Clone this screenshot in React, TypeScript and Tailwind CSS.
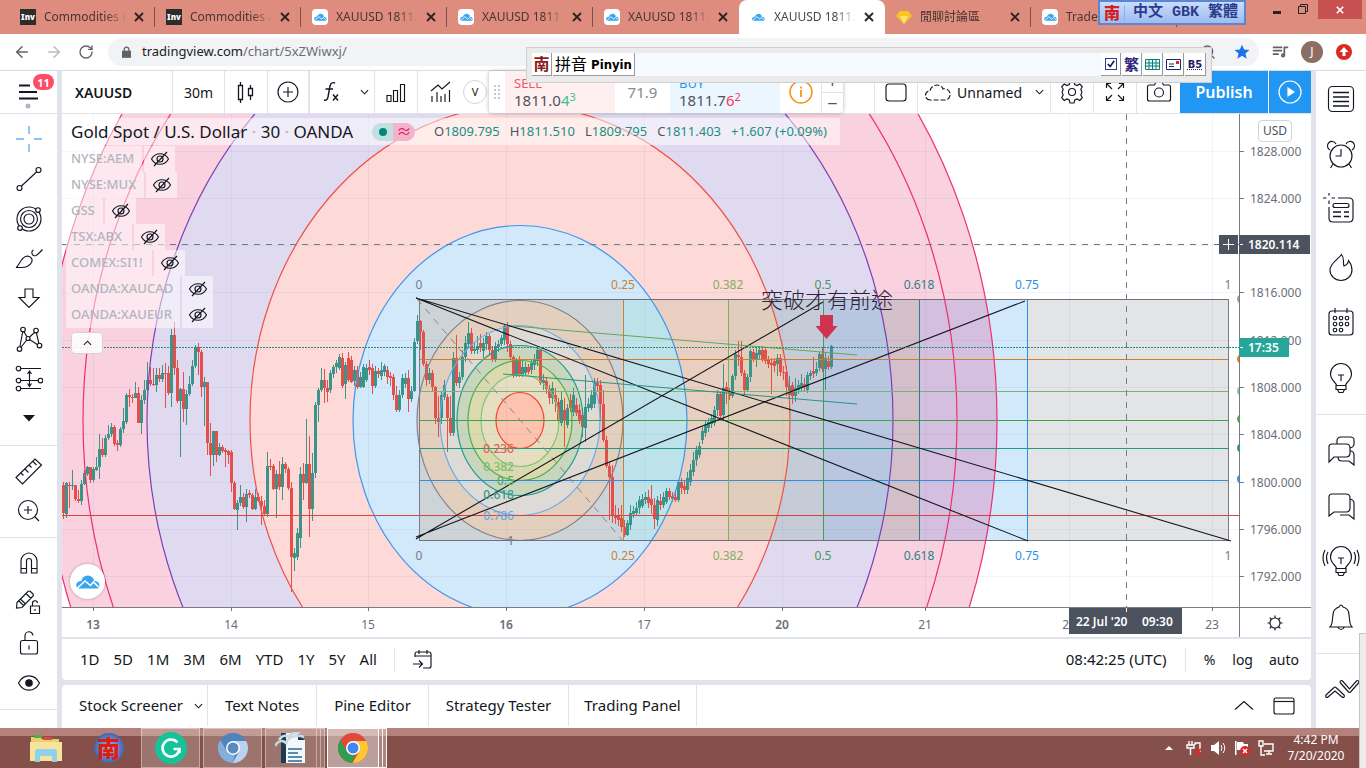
import React from 'react';
import { ArrowLeft, ArrowRight, RotateCw, Search } from 'lucide-react';

type Candle = [open: number, close: number, high?: number, low?: number];

const CHART_LEFT = 62;
const CHART_TOP = 114;
const AXIS_X = 1239;
const AXIS_Y = 607;
const BAR = 3;

// every value is a y position on the price pane
const CANDLES: Candle[] = [
  [485, 513, 482, 519], [514, 483, 482, 518], [485, 486, 482, 508], [486, 485, 470, 490], [485, 499, 485, 501],
  [499, 501, 490, 503], [501, 484, 480, 505], [484, 473, 470, 485], [474, 467, 466, 476], [467, 480, 467, 483],
  [480, 469, 467, 482], [470, 467, 457, 471], [467, 449, 434, 479], [449, 455, 438, 457], [455, 438, 435, 457],
  [438, 434, 425, 440], [434, 427, 423, 437], [427, 444, 425, 446], [443, 445, 440, 451], [445, 429, 427, 447],
  [429, 421, 408, 433], [422, 395, 393, 424], [395, 397, 389, 407], [397, 398, 394, 403], [398, 393, 382, 398],
  [393, 423, 387, 423], [423, 400, 395, 434], [400, 390, 380, 404], [390, 380, 362, 391], [380, 384, 367, 386],
  [384, 385, 368, 386], [385, 375, 368, 392], [375, 379, 368, 382], [379, 373, 365, 382], [373, 374, 363, 408],
  [373, 393, 366, 395], [393, 335, 329, 407], [335, 368, 322, 375], [368, 401, 360, 403], [401, 389, 388, 457],
  [389, 409, 372, 422], [409, 394, 390, 425], [394, 384, 376, 396], [384, 366, 360, 386], [366, 347, 345, 368],
  [347, 352, 343, 375], [352, 387, 350, 397], [387, 382, 377, 426], [382, 443, 382, 455], [443, 455, 423, 476],
  [455, 431, 431, 466], [431, 455, 431, 462], [455, 447, 443, 456], [447, 451, 445, 453], [450, 452, 448, 467],
  [451, 455, 450, 464], [452, 483, 450, 492], [483, 509, 481, 510], [510, 503, 500, 530], [503, 497, 485, 506],
  [497, 507, 493, 509], [507, 494, 489, 522], [493, 495, 490, 498], [495, 509, 493, 510], [509, 497, 489, 510],
  [497, 501, 493, 502], [501, 506, 496, 525], [506, 514, 500, 516], [514, 466, 452, 517], [466, 467, 459, 470],
  [466, 489, 464, 490], [489, 474, 470, 518], [474, 487, 461, 490], [487, 464, 457, 500], [464, 469, 462, 473],
  [469, 488, 467, 490], [488, 557, 482, 592], [558, 553, 548, 571], [557, 533, 528, 560], [538, 474, 467, 548],
  [474, 483, 463, 500], [483, 464, 419, 484], [464, 509, 436, 537], [509, 473, 453, 521], [473, 405, 402, 478],
  [405, 390, 388, 422], [390, 380, 368, 392], [380, 388, 369, 403], [388, 392, 380, 402], [390, 373, 370, 393],
  [374, 367, 365, 378], [367, 363, 360, 373], [368, 357, 354, 370], [358, 386, 353, 388], [384, 365, 362, 399],
  [358, 380, 352, 382], [360, 382, 356, 383], [381, 370, 366, 386], [370, 387, 366, 389], [387, 377, 372, 388],
  [387, 367, 364, 388], [380, 368, 364, 382], [367, 370, 360, 375], [368, 386, 364, 394], [386, 371, 366, 388],
  [371, 374, 368, 378], [376, 370, 362, 380], [372, 366, 364, 376], [370, 377, 366, 384], [376, 378, 372, 386],
  [377, 395, 374, 400], [395, 410, 386, 412], [410, 395, 390, 412], [395, 378, 374, 398], [384, 378, 373, 388],
  [378, 399, 370, 412], [399, 391, 386, 402], [391, 342, 338, 392], [341, 321, 315, 344], [321, 332, 320, 350],
  [332, 364, 330, 366], [364, 380, 361, 386], [380, 373, 368, 384], [373, 387, 370, 392], [387, 418, 386, 424],
  [418, 422, 396, 437], [418, 395, 392, 424], [397, 385, 380, 400], [397, 418, 394, 452], [418, 433, 396, 436],
  [433, 358, 352, 436], [358, 383, 335, 386], [383, 377, 372, 388], [377, 357, 350, 380], [357, 343, 336, 362],
  [344, 333, 322, 348], [333, 351, 328, 354], [351, 349, 342, 354], [350, 346, 336, 354], [343, 348, 334, 352],
  [351, 343, 338, 358], [344, 336, 332, 350], [336, 350, 334, 354], [350, 360, 346, 362], [360, 346, 342, 362],
  [347, 344, 340, 352], [344, 338, 335, 346], [340, 326, 324, 345], [326, 344, 322, 352], [344, 357, 341, 360],
  [357, 376, 355, 378], [376, 360, 358, 377], [360, 375, 356, 377], [375, 367, 360, 377], [373, 367, 362, 376],
  [367, 372, 364, 374], [370, 363, 360, 374], [365, 360, 354, 370], [361, 350, 346, 366], [350, 383, 349, 385],
  [383, 380, 374, 390], [381, 389, 378, 394], [389, 398, 385, 404], [398, 388, 382, 404], [395, 402, 388, 412],
  [402, 420, 398, 424], [423, 400, 392, 426], [410, 420, 398, 447], [425, 408, 404, 428], [400, 408, 394, 412],
  [412, 395, 388, 416], [405, 413, 398, 416], [410, 420, 404, 424], [415, 427, 408, 437], [428, 407, 375, 442],
  [408, 404, 398, 412], [408, 395, 390, 410], [404, 382, 378, 408], [383, 386, 378, 392], [385, 404, 380, 420],
  [404, 440, 390, 442], [440, 466, 436, 468], [466, 477, 462, 520], [477, 515, 465, 523], [515, 518, 505, 524],
  [516, 520, 508, 526], [518, 527, 505, 532], [527, 535, 520, 537], [535, 523, 520, 536], [525, 513, 505, 530],
  [514, 511, 506, 518], [513, 508, 502, 516], [508, 500, 496, 514], [506, 499, 494, 508], [500, 497, 492, 504],
  [497, 503, 490, 508], [499, 505, 485, 514], [505, 519, 498, 529], [520, 500, 496, 526], [501, 505, 494, 510],
  [505, 497, 492, 508], [502, 491, 488, 504], [491, 497, 488, 500], [496, 499, 492, 502], [497, 500, 492, 502],
  [500, 482, 480, 502], [482, 488, 478, 494], [486, 490, 480, 494], [490, 478, 472, 494], [482, 470, 464, 486],
  [472, 460, 452, 476], [460, 450, 446, 466], [455, 446, 442, 458], [440, 431, 427, 444], [433, 425, 420, 437],
  [428, 422, 418, 432], [424, 418, 414, 428], [423, 410, 406, 426], [410, 394, 390, 416], [394, 416, 392, 419],
  [415, 388, 364, 420], [387, 391, 382, 404], [393, 396, 388, 400], [396, 376, 374, 398], [376, 354, 350, 380],
  [355, 357, 341, 366], [357, 373, 341, 376], [373, 390, 370, 395], [390, 377, 374, 392], [377, 351, 349, 382],
  [352, 359, 349, 362], [360, 353, 348, 367], [355, 350, 346, 360], [350, 359, 346, 362], [350, 361, 348, 364],
  [360, 364, 356, 368], [363, 365, 358, 394], [361, 366, 358, 372], [364, 358, 354, 376], [358, 372, 354, 376],
  [372, 373, 366, 380], [372, 387, 366, 396], [395, 386, 376, 413], [385, 396, 382, 404], [396, 388, 378, 402],
  [390, 385, 380, 394], [388, 383, 374, 392], [384, 387, 378, 392], [390, 375, 372, 393], [376, 373, 370, 380],
  [371, 374, 357, 378], [373, 369, 362, 376], [368, 354, 352, 371], [354, 369, 348, 372], [369, 358, 352, 390],
  [361, 367, 356, 370], [367, 346, 345, 369],
];

const CX = 520;
const CY = 420.5;

// outer fib circles, largest first
const OUTER = [
  { rx: 477, ry: 556, fill: '#fad1df', stroke: '#ed2f70' },
  { rx: 437, ry: 510, fill: '#fad1df', stroke: '#ed2f70' },
  { rx: 373, ry: 436, fill: '#e0daf1', stroke: '#7e3fb5' },
  { rx: 270, ry: 315, fill: '#fddad7', stroke: '#f0504b' },
  { rx: 167, ry: 195, fill: '#d2e9fc', stroke: '#3f97ec' },
];

const INNER = [
  { rx: 103, ry: 120, fill: '#e2cfbe', stroke: '#84828a' },
  { rx: 80, ry: 95, fill: '#dedad5', stroke: '#69aeee' },
  { rx: 63, ry: 75, fill: '#c8d6bd', stroke: '#1f9d8f' },
  { rx: 52, ry: 60, fill: '#dbd9ae', stroke: '#4caf50' },
  { rx: 39, ry: 46, fill: '#e6dec0', stroke: '#7cc77f' },
  { rx: 24, ry: 28, fill: '#fdc3ae', stroke: '#f44336' },
];

// fills: background, then outer circles in the order of OUTER
const COLUMNS = [
  { id: 'c0', x: 419, w: 204, fills: ['#cdd4d8', '#cdd4d8', '#cdd4d8', '#cdd4d8', '#cdd4d8', '#cdd4d8'] },
  { id: 'c1', x: 623, w: 105, fills: ['#e9cfc2', '#e9cfc2', '#e9cfc2', '#e9cfc2', '#e9cfc2', '#bde2e9'] },
  { id: 'c2', x: 728, w: 95, fills: ['#c6cbd8', '#c6cbd8', '#c6cbd8', '#c6cbd8', '#e0cdbc', '#e0cdbc'] },
  { id: 'c3', x: 823, w: 96, fills: ['#d2bfca', '#d2bfca', '#d2bfca', '#b8c7df', '#b8c7df', '#b8c7df'] },
  { id: 'c4', x: 919, w: 108, fills: ['#d2e9fc', '#d5bfe0', '#d5bfe0', '#d5bfe0', '#d5bfe0', '#d5bfe0'] },
  { id: 'c5', x: 1027, w: 201, fills: ['#e3e4e6', '#e3e4e6', '#e3e4e6', '#e3e4e6', '#e3e4e6', '#e3e4e6'] },
];

const TIME_LEVELS = [
  { x: 419, label: '0', color: '#787b86' },
  { x: 623, label: '0.25', color: '#cc812f' },
  { x: 728, label: '0.382', color: '#83ad60' },
  { x: 823, label: '0.5', color: '#46985b' },
  { x: 919, label: '0.618', color: '#2a8286' },
  { x: 1027, label: '0.75', color: '#2b8fe8' },
  { x: 1228, label: '1', color: '#787b86' },
];

const PRICE_LEVELS = [
  { y: 359, color: '#cf7c2b' },
  { y: 391, color: '#7fae77' },
  { y: 420, color: '#45a049' },
  { y: 448, color: '#1f9b85' },
  { y: 480, color: '#2b8fdc' },
];

const CIRCLE_LABELS = [
  { y: 453, label: '0.236', color: '#e5604f' },
  { y: 471, label: '0.382', color: '#7cc070' },
  { y: 485, label: '0.5', color: '#52b055' },
  { y: 499, label: '0.618', color: '#2a9e8f' },
  { y: 520, label: '0.786', color: '#6aa9e0' },
  { y: 545, label: '1', color: '#84828a' },
];

const PRICES = [
  [151, '1828.000'], [198, '1824.000'], [292, '1816.000'], [340, '1812.000'], [387, '1808.000'],
  [434, '1804.000'], [482, '1800.000'], [529, '1796.000'], [576, '1792.000'],
] as const;

const DAYS = [
  [93, '13', true], [231, '14', false], [368, '15', false], [506, '16', true], [644, '17', false],
  [782, '20', true], [925, '21', false], [1069, '22', false], [1212, '23', false],
] as const;

const SYMBOLS = [
  { name: 'NYSE:AEM', width: 'w-[76px]' },
  { name: 'NYSE:MUX', width: 'w-[78px]' },
  { name: 'GSS', width: 'w-[37px]' },
  { name: 'TSX:ABX', width: 'w-[66px]' },
  { name: 'COMEX:SI1!', width: 'w-[86px]' },
  { name: 'OANDA:XAUCAD', width: 'w-[114px]' },
  { name: 'OANDA:XAUEUR', width: 'w-[114px]' },
];

const TABS = [
  { title: 'Commodities Futures', icon: 'inv' },
  { title: 'Commodities and more', icon: 'inv' },
  { title: 'XAUUSD 1811.403', icon: 'tv' },
  { title: 'XAUUSD 1811.403', icon: 'tv' },
  { title: 'XAUUSD 1811.403', icon: 'tv' },
  { title: 'XAUUSD 1811.403', icon: 'tv', active: true },
  { title: '閒聊討論區', icon: 'gem' },
  { title: 'TradersBlog', icon: 'tv' },
];

interface GlyphProps {
  size?: string;
  box?: number;
  className?: string;
  children: React.ReactNode;
}

const Glyph: React.FC<GlyphProps> = ({ size = 'size-7', box = 28, className = '', children }) => (
  <svg
    viewBox={`0 0 ${box} ${box}`}
    className={`${size} shrink-0 ${className}`}
    fill="none"
    stroke="currentColor"
    strokeWidth="1.150"
    aria-hidden="true"
  >
    {children}
  </svg>
);

const CloudLogo: React.FC<{ className: string }> = ({ className }) => (
  <svg viewBox="0 0 24 14" className={className} aria-hidden="true">
    <path d="M3 14a3.500 3.500 0 0 1-1-6.500q2-1.500 3.500-1a6.500 6.500 0 0 1 11.500-3q1 1.500 1 3q5 0 5.500 4a3.500 3.500 0 0 1-2 3.500z" fill="#37a6ef" />
    <path d="M1.500 13.500L9 6.500l5.500 4.500 3-3.500 5 5" fill="none" stroke="#fff" strokeWidth="1.600" />
  </svg>
);

const Chevron: React.FC<{ className?: string }> = ({ className = '' }) => (
  <svg viewBox="0 0 10 6" className={`w-[9px] h-[6px] ${className}`} fill="none" stroke="#131722" strokeWidth="1.200" aria-hidden="true">
    <path d="M1 1l4 4 4-4" />
  </svg>
);

const TOOLS: { label: string; icon: React.ReactNode }[][] = [
  [
    { label: 'Cross', icon: <Glyph className="text-[#86c5fa]"><path strokeWidth="1.800" d="M1 14h8M19 14h8M14 1v8M14 19v8" /></Glyph> },
    { label: 'Trend line', icon: <Glyph><circle cx="4.500" cy="23" r="2.500" /><circle cx="23.500" cy="5" r="2.500" /><path d="M6.500 21L21.500 7" /></Glyph> },
    {
      label: 'Fibonacci',
      icon: (
        <Glyph>
          <circle cx="14" cy="14" r="12" /><circle cx="14" cy="14" r="8.500" /><circle cx="14" cy="14" r="5" />
          <circle cx="23" cy="5" r="2.300" fill="#fff" /><circle cx="5" cy="23" r="2.300" fill="#fff" />
        </Glyph>
      ),
    },
    { label: 'Brush', icon: <Glyph><path d="M1 22.500c3-1.500 4.500-9 9.500-11c4-1.500 8 2 6 6c-2.500 4.500-6 5-10 5zM18.500 5c-3 1.500-1.500 7 2.500 5.500q2-1 6.500-6" /></Glyph> },
    { label: 'Icon', icon: <Glyph><path d="M10 4h8v8.500h6L14 22.500 4 12.500h6z" /></Glyph> },
    {
      label: 'Pattern',
      icon: (
        <Glyph>
          <path d="M8 5L4.500 24 13 13.500 8 5M13 13.500L21 6l3.500 15L13 13.500" />
          <g fill="#fff">
            <circle cx="8" cy="4.500" r="2.300" /><circle cx="21" cy="5.500" r="2.300" /><circle cx="4.500" cy="24" r="2.300" />
            <circle cx="24.500" cy="20.500" r="2.300" /><circle cx="13" cy="13.500" r="2" />
          </g>
        </Glyph>
      ),
    },
    {
      label: 'Prediction',
      icon: (
        <Glyph>
          <path d="M6 3.500h20M6 15.500h17M6 23.500h20M14.500 7v14M12.500 9l2-3 2 3M12.500 18.500l2 3 2-3" />
          <circle cx="3.500" cy="3.500" r="2.300" /><circle cx="3.500" cy="15.500" r="2.300" /><circle cx="3.500" cy="23.500" r="2.300" /><circle cx="25.500" cy="15.500" r="2.300" />
        </Glyph>
      ),
    },
    { label: 'More tools', icon: <Glyph><path d="M8 10h12l-6 6.500z" fill="#131722" stroke="none" /></Glyph> },
  ],
  [
    { label: 'Measure', icon: <Glyph><path d="M1 20.500L20 2l6.500 6L7.500 27zM6 16l2.500 2.500M10 12l3.500 3.500M14 8l2.500 2.500M18 4.500l3.500 3.500" /></Glyph> },
    { label: 'Zoom in', icon: <Glyph><circle cx="13" cy="13" r="9.500" /><path d="M20 20l4 4M13 9v8M9 13h8" /></Glyph> },
  ],
  [
    { label: 'Magnet', icon: <Glyph><path d="M6 24V12a8 8 0 0 1 16 0v12h-5.500V12a2.500 2.500 0 0 0-5 0v12zM6 19.500h5.500M16.500 19.500H22" /></Glyph> },
    {
      label: 'Stay in drawing mode',
      icon: (
        <Glyph>
          <path d="M2 13.500L13 2.500q1-1 2.500 0l2.500 2.500q1 1 0 2L7 18.500l-5.500.500zM4 12l4.500 4.500M6 10.500l4.500 4.500M11 4.500l5 5" />
          <path d="M15.500 17h9v7.500h-9zM17.500 17v-2.500a2.500 2.500 0 0 1 5-.500M20 20v2" />
        </Glyph>
      ),
    },
    { label: 'Lock drawings', icon: <Glyph><rect x="5.500" y="11.500" width="17" height="13.500" rx="2" /><path d="M10 11.500V7a4 4 0 0 1 8-.500M14 16.500v4" /></Glyph> },
    { label: 'Hide drawings', icon: <Glyph><path d="M3.500 14c5-9.500 16-9.500 21 0c-5 9.500-16 9.500-21 0z" /><circle cx="14" cy="14" r="3.200" fill="#131722" /></Glyph> },
  ],
];

const bulb = (
  <>
    <path d="M13.500 24.500c0-3-6-5-6-11.500a10.500 10.500 0 0 1 21 0c0 6.500-6 8.500-6 11.500zM13 24.500h10v4H13zM14.500 28.500l1.500 3h4l1.500-3" />
    <path d="M15 14h6M18 14v6" />
  </>
);

const WIDGETS: { label: string; icon: React.ReactNode }[][] = [
  [
    { label: 'Watchlist', icon: <><rect x="5.500" y="5.500" width="25" height="25" rx="4" /><path strokeWidth="1.500" d="M10 11.500h16M10 16h16M10 20.500h16M10 25h16" /></> },
    {
      label: 'Alerts',
      icon: <><circle cx="18" cy="19" r="11" /><path d="M18 12v7h-5.500M10 27l-2.500 4M26 27l2.500 4" /><path d="M7 13a4.500 4.500 0 1 1 6-6M23 7a4.500 4.500 0 1 1 6 6" /></>,
    },
    {
      label: 'Data window',
      icon: <><path d="M15 5h11q4 0 4 4v16q0 4-4 4H10q-4 0-4-4V14M0 5h3.500M8.500 5H12M6 0v2.500M6 7.500V11" /><rect x="10" y="10.500" width="16" height="4" rx="2" /><path strokeWidth="1.500" d="M10 19h8M21 19h5M10 23.500h8M21 23.500h5" /></>,
    },
    { label: 'Hotlist', icon: <path d="M18.500 5.500c-4 5.500-11.500 9-11.500 15.500a11 10.500 0 0 0 22 0c0-4-1.500-7-3.500-9.500q-.5 4-4.500 5.500c-1.500-4 1-7-2.500-11.500z" /> },
    {
      label: 'Calendar',
      icon: (
        <>
          <rect x="6" y="6" width="24" height="24" rx="3" /><path d="M12 3v5M24 3v5" />
          {[[12, 13], [18, 13], [24, 13], [12, 19], [18, 19], [24, 19], [12, 25], [18, 25]].map(([x, y]) => (
            <circle key={`${x}-${y}`} cx={x} cy={y} r="1.800" />
          ))}
        </>
      ),
    },
    { label: 'My ideas', icon: bulb },
  ],
  [
    { label: 'Public chats', icon: <><path d="M9 12h14q4 0 4 4v5q0 4-4 4H11l-5 5V15q0-3 3-3z" /><path d="M14 12V9q0-4 4-4h9q4 0 4 3v4q0 3-4 4M27 19q4 0 4 4v10l-5-4h-7q-4 0-4-4" /></> },
    { label: 'Private chats', icon: <><path d="M9 6h14q4 0 4 4v10q0 4-4 4H11l-5 4V9q0-3 3-3z" /><path d="M27 11q4 1 4 4v16l-5-4h-9" /></> },
    { label: 'Ideas stream', icon: <>{bulb}<path d="M5 8q-3 5 0 12M2 6q-4 8 0 16M31 8q3 5 0 12M34 6q4 8 0 16" /></> },
    { label: 'Notifications', icon: <path d="M7 27c3-3 2-7 3-12c0-4 3-7 6-8q2-4 4 0c4 1 6 4 6 8c1 5 0 9 3 12zM14.500 27q3.500 5 7 0" /> },
  ],
  [
    { label: 'Order panel', icon: <path d="M3 26q-1-1 0-2l8-7.500q1-1 2 0l8 7.500q1 1 0 2t-2 0l-7-6-7 6q-1 1-2 0zM17.500 10q1-1 2 0l7 8 7-8q1-1 2 0t0 2l-8 9q-1 1-2 0l-8-9q-1-1 0-2z" /> },
  ],
];

const RANGES = ['1D', '5D', '1M', '3M', '6M', 'YTD', '1Y', '5Y', 'All'];

const PANELS = [
  { label: 'Text Notes', width: 'w-[109px]' },
  { label: 'Pine Editor', width: 'w-[112px]' },
  { label: 'Strategy Tester', width: 'w-[140px]' },
  { label: 'Trading Panel', width: 'w-[128px]' },
];

const Favicon: React.FC<{ kind: string }> = ({ kind }) => {
  if (kind === 'inv') {
    return (
      <span className="flex size-4 shrink-0 items-center justify-center bg-[#2c2c2c] text-[8px] font-black text-white">Inv</span>
    );
  }
  if (kind === 'gem') {
    return (
      <svg viewBox="0 0 16 16" className="size-4 shrink-0" aria-hidden="true">
        <path d="M4 2h8l4 5-8 8-8-8z" fill="#f9c61c" />
        <path d="M4 7h8l-4 8z" fill="#fde277" />
      </svg>
    );
  }
  return (
    <span className="flex size-4 shrink-0 items-center justify-center rounded-sm bg-white">
      <CloudLogo className="w-[13px] h-2" />
    </span>
  );
};

const TabStrip: React.FC = () => (
  <div className="relative flex h-[34px] bg-[#dd8c7e] pl-[9px] text-[#4b3531]">
    {TABS.map((tab, i) => (
      <div
        key={i}
        className={`relative flex h-full w-[146px] items-center gap-2 pl-[11px] text-[12px] ${tab.active ? 'rounded-t-lg bg-white text-[#45484c]' : ''}`}
      >
        <Favicon kind={tab.icon} />
        <span className="w-[82px] overflow-hidden whitespace-nowrap [mask-image:linear-gradient(to_right,black_75%,transparent)]">{tab.title}</span>
        <button aria-label="Close tab" className="text-[#2b2220]">
          <svg viewBox="0 0 10 10" className="size-[10px]" stroke="currentColor" strokeWidth="1.800"><path d="M1 1l8 8M9 1L1 9" /></svg>
        </button>
        {!tab.active && i !== 4 && <span className="absolute right-0 top-[7px] h-5 w-px bg-[#7d5148]" />}
      </div>
    ))}
    <div className="ml-auto flex items-start pr-1">
      <button aria-label="Minimize" className="mt-[11px] h-[3px] w-2 bg-[#2b2220]" />
      <button aria-label="Restore" className="ml-[17px] mt-1">
        <svg viewBox="0 0 10 10" className="size-[10px]" fill="none" stroke="#2b2220"><path d="M.5 2.500h7v7h-7zM2.500 2V.5h7v7H8" /></svg>
      </button>
      <button aria-label="Close" className="ml-[10px] flex h-[19px] w-11 items-center justify-center bg-[#c75050]">
        <svg viewBox="0 0 10 10" className="size-2" stroke="#fff" strokeWidth="2"><path d="M1 1l8 8M9 1L1 9" /></svg>
      </button>
    </div>
    <div className="absolute right-[120px] top-0 z-30 flex h-[25px] w-[148px] items-center gap-2 border-2 border-[#5c86cf] bg-linear-to-b from-[#c9dcfc] to-[#9dbcf3] pl-1 text-[#2b3c8c]">
      <span className="border-r border-[#8fb0ea] pr-1 text-[16px] font-black leading-none text-[#d3201f]">南</span>
      <span className="whitespace-nowrap font-['Liberation_Mono','Noto_Sans_CJK_TC',monospace] text-[15px] font-bold leading-none">中文 GBK 繁體</span>
    </div>
  </div>
);

const AddressBar: React.FC = () => (
  <div className="flex h-[37px] items-center border-b border-[#d9dce1] bg-white pl-[13px] pr-[14px] text-[#5f6368]">
    <button aria-label="Back"><ArrowLeft className="size-[18px]" /></button>
    <button aria-label="Forward" className="ml-[14px] text-[#babcbe]"><ArrowRight className="size-[18px]" /></button>
    <button aria-label="Reload" className="ml-[15px]"><RotateCw className="size-4" /></button>
    <div className="ml-[14px] flex h-7 flex-1 items-center rounded-full bg-[#f1f3f4] pl-[14px] pr-[9px] text-[13px]">
      <svg viewBox="0 0 10 13" className="mr-[11px] h-[12px] w-[9px]" aria-hidden="true">
        <path d="M0 5h10v8H0z" fill="#5f6368" /><path d="M2.500 5V3.500a2.500 2.500 0 0 1 5 0V5" fill="none" stroke="#5f6368" strokeWidth="1.500" />
      </svg>
      <label htmlFor="url" className="text-[#202124]">tradingview.com</label>
      <input id="url" className="min-w-0 flex-1 bg-transparent text-[#6b6f74] outline-none" defaultValue="/chart/5xZWiwxj/" />
      <Search className="mr-[18px] size-4" />
      <button aria-label="Bookmark">
        <svg viewBox="0 0 24 24" className="size-[16px]" fill="#1a73e8"><path d="M12 1l3.200 7.300 8 .7-6 5.300 1.800 7.700-7-4.200-7 4.200 1.800-7.700-6-5.300 8-.7z" /></svg>
      </button>
    </div>
    <button aria-label="Media" className="ml-[13px]">
      <svg viewBox="0 0 18 14" className="h-3 w-[17px]" fill="none" stroke="currentColor" strokeWidth="2"><path d="M0 1.500h11M0 5.500h11M0 9.500h7M13.500 11V1.500H18" /><circle cx="12" cy="11" r="1.500" /></svg>
    </button>
    <button className="ml-[12px] flex size-[22px] items-center justify-center rounded-full bg-[#8d6e63] text-[12px] text-white">J</button>
    <button aria-label="Update" className="ml-[13px] flex size-4 items-center justify-center rounded-full bg-[#d92b20]">
      <svg viewBox="0 0 10 10" className="size-[10px]" fill="#fff"><path d="M5 0l4.500 5H6.500v4h-3V5H.500z" /></svg>
    </button>
  </div>
);

const ImeBar: React.FC = () => (
  <div className="absolute left-[526px] right-[154px] top-[47px] z-20 h-[36px] border border-[#cfcfcf] bg-[#ebebeb] p-[5px]">
    <div className="flex h-[23px] items-stretch gap-px bg-[#f4faff] text-black">
      <button className="flex w-[20px] items-center justify-center border-b border-r border-[#9a9a9a] bg-white text-[16px] font-bold leading-none text-[#8c1b1b]">南</button>
      <button className="flex w-[82px] items-center justify-center gap-1 whitespace-nowrap border-b border-r border-[#9a9a9a] bg-white text-[16px] leading-none">
        拼音 <span className="font-['DejaVu_Sans_Condensed',sans-serif] text-[13px] font-bold">Pinyin</span>
      </button>
      <div className="ml-auto flex gap-px">
        <label className="relative flex w-5 items-center justify-center border-b border-r border-[#9a9a9a] bg-white">
          <input type="checkbox" defaultChecked aria-label="Enable" className="size-3 appearance-none border border-[#2d3d95] bg-white" />
          <svg viewBox="0 0 10 10" className="pointer-events-none absolute size-2" fill="none" stroke="#141a50" strokeWidth="2"><path d="M1 5l3 3 5-7" /></svg>
        </label>
        <button className="w-5 border-b border-r border-[#9a9a9a] bg-white text-[15px] font-bold leading-none text-[#2c2380]">繁</button>
        <button aria-label="Keyboard" className="flex w-5 items-center justify-center border-b border-r border-[#9a9a9a] bg-white">
          <svg viewBox="0 0 15 11" className="h-[11px] w-[15px] shrink-0"><path d="M.5.500h14v10H.500z" fill="#e9fffb" stroke="#0d7a72" /><path d="M1 4h13M1 7h13M4 1v9M7.500 1v9M11 1v9" stroke="#0d7a72" /></svg>
        </button>
        <button aria-label="Mail" className="flex w-5 items-center justify-center border-b border-r border-[#9a9a9a] bg-white">
          <svg viewBox="0 0 15 11" className="h-[11px] w-[15px] shrink-0"><path d="M.5.500h14v10H.500z" fill="#fff" stroke="#1d2673" /><path d="M3 5h5M3 7.500h5" stroke="#1d2673" /><path d="M10 2h3v3h-3z" fill="#d22" /></svg>
        </button>
        <button className="w-[21px] border-b border-r border-[#9a9a9a] bg-white font-['DejaVu_Sans_Condensed',sans-serif] text-[11px] font-bold leading-none text-[#1d1d63] underline decoration-dotted">B5</button>
      </div>
    </div>
  </div>
);

const TradeWidget: React.FC = () => (
  <div className="absolute left-[427px] top-0 z-10 flex h-[42px] w-[354px] rounded bg-white text-[15px] shadow-[0_0_4px_rgba(0,0,0,0.3)]">
    <div className="flex w-[16px] items-center justify-center text-[#c4c7cf]">
      <svg viewBox="0 0 6 14" className="h-[14px] w-[6px]" fill="currentColor">
        {[0, 4, 8, 12].map((y) => <path key={y} d={`M0 ${y}h2v2H0zM4 ${y}h2v2H4z`} />)}
      </svg>
    </div>
    <button className="flex w-[110px] flex-col justify-center bg-[#feeff1] pl-[9px] text-left leading-[17px] text-[#50535e]">
      <span className="text-[13px] text-[#f7525f]">SELL</span>
      <span>1811.0<span className="text-[#42bd94]">4<sup className="text-[11px]">3</sup></span></span>
    </button>
    <span className="flex w-[55px] items-center justify-center text-[15px] text-[#868993]">71.9</span>
    <button className="flex w-[110px] flex-col justify-center bg-[#ecf6fe] pl-[9px] text-left leading-[17px] text-[#50535e]">
      <span className="text-[13px] text-[#2196f3]">BUY</span>
      <span>1811.7<span className="text-[#f23a5c]">6<sup className="text-[11px]">2</sup></span></span>
    </button>
    <button aria-label="Info" className="flex w-[41px] items-center justify-center text-[#f7931a]">
      <Glyph size="size-6" box={24}><circle cx="12" cy="12" r="11" strokeWidth="1.500" /><path d="M12 10v7M12 6.500v2" strokeWidth="1.800" /></Glyph>
    </button>
    <div className="flex flex-1 flex-col border-l border-[#e0e3eb] text-[18px] leading-none text-[#50535e]">
      <button className="flex-1 border-b border-[#e0e3eb]">+</button>
      <button className="flex-1">−</button>
    </div>
  </div>
);

const TopToolbar: React.FC = () => (
  <div className="relative flex h-[43px] items-stretch border-b border-[#e0e3eb] bg-white text-[14px] text-[#131722]">
    <button className="w-[111px] border-r border-[#e0e3eb] pl-[13px] text-left font-semibold">XAUUSD</button>
    <button className="w-[52px] border-r border-[#e0e3eb]">30m</button>
    <button aria-label="Bar style" className="flex w-[43px] items-center justify-center border-r border-[#e0e3eb]">
      <Glyph><path d="M6.500 7.500h4v14h-4zM8.500 4v3.500M8.500 21.500V25M16.500 10.500h4v7h-4zM18.500 7v3.500M18.500 17.500V22" strokeWidth="1.300" /></Glyph>
    </button>
    <button aria-label="Compare" className="flex w-[42px] items-center justify-center border-r-2 border-[#e0e3eb]">
      <Glyph><circle cx="14" cy="14" r="10" /><path d="M14 9v10M9 14h10" /></Glyph>
    </button>
    <button aria-label="Indicators" className="flex w-11 items-center justify-center">
      <Glyph><path d="M17 5q-4-1.500-5 3L10 19q-1 4-4 3M7.500 11h7.500M15 16.500l5 6M20 16.500l-5 6" strokeWidth="1.400" /></Glyph>
    </button>
    <button aria-label="Favorites" className="flex w-[21px] items-center justify-center border-r border-[#e0e3eb]"><Chevron /></button>
    <button aria-label="Financials" className="flex w-[43px] items-center justify-center border-r border-[#e0e3eb]">
      <Glyph><path d="M5 17.500h4v6H5zM11.500 12.500h4v11h-4zM18.500 6.500h4v17h-4z" /></Glyph>
    </button>
    <button aria-label="Templates" className="flex w-[45px] items-center justify-center">
      <Glyph><path d="M4 13l7-6 4 4 8-7M5 18v6M10 14v10M14 18v6M18 16v8M22.500 12v12" /></Glyph>
    </button>
    <button className="mt-[9px] flex size-6 items-center justify-center rounded-full border border-[#d1d4dc] text-[11px]">V</button>
    <TradeWidget />
    <div className="ml-auto flex items-stretch">
      <button aria-label="Layout" className="flex w-11 items-center justify-center border-x border-[#e0e3eb]">
        <Glyph><rect x="4" y="6" width="20" height="17" rx="3" /></Glyph>
      </button>
      <button className="flex w-[133px] items-center border-r border-[#e0e3eb] pl-[6px]">
        <Glyph><path strokeDasharray="5 2" d="M6 22a4.500 4.500 0 0 1 0-9c1-7 11-8 13-2a5.500 5.500 0 0 1 3 11z" /></Glyph>
        <span className="ml-[5px]">Unnamed</span>
        <Chevron className="ml-[13px]" />
      </button>
      <button aria-label="Settings" className="flex w-[43px] items-center justify-center border-r border-[#e0e3eb]">
        <Glyph>
          <path d="M12 3.500h4l.8 3 2.200 1 2.800-1.500 2.500 2.800-1.500 2.700 1 2.200v1l-1 2.300 1.500 2.700-2.500 2.800-2.800-1.500-2.200 1-.8 3h-4l-.8-3-2.200-1-2.800 1.500-2.500-2.800 1.500-2.700-1-2.300v-1l1-2.200-1.500-2.700 2.500-2.800 2.800 1.500 2.200-1z" />
          <circle cx="14" cy="14" r="3.500" />
        </Glyph>
      </button>
      <button aria-label="Fullscreen" className="flex w-[43px] items-center justify-center border-r border-[#e0e3eb]">
        <Glyph><path d="M5.500 10V5.500H10M5.500 5.500l5.500 5.500M18 5.500h4.500V10M22.500 5.500L17 11M5.500 18v4.500H10M5.500 22.500L11 17M22.500 18v4.500H18M22.500 22.500L17 17" /></Glyph>
      </button>
      <button aria-label="Snapshot" className="flex w-[43px] items-center justify-center">
        <Glyph><path d="M4.500 7h5l1.500-3h6l1.500 3h5q2 0 2 2v12q0 2-2 2h-19q-2 0-2-2V9q0-2 2-2z" /><circle cx="14" cy="14.500" r="4.500" /></Glyph>
      </button>
      <button className="w-[88px] bg-[#2196f3] text-[16px] font-semibold text-white">Publish</button>
      <button aria-label="Play" className="ml-px flex w-[42px] items-center justify-center bg-[#2196f3] text-white">
        <Glyph size="size-6" box={24}><circle cx="12" cy="12" r="11" /><path d="M10 8l6 4-6 4z" fill="currentColor" /></Glyph>
      </button>
    </div>
  </div>
);

const ChartCanvas: React.FC = () => (
  <svg
    viewBox={`${CHART_LEFT} ${CHART_TOP} 1249 523`}
    preserveAspectRatio="xMinYMin slice"
    className="block h-full w-full bg-white"
    fontSize="12"
    role="img"
    aria-label="Gold price chart"
  >
    <defs>
      <clipPath id="pane"><rect x={CHART_LEFT} y={CHART_TOP} width={AXIS_X - CHART_LEFT} height={AXIS_Y - CHART_TOP} /></clipPath>
      {COLUMNS.map((c) => (
        <clipPath key={c.id} id={c.id}><rect x={c.x} y={299} width={c.w} height={242} /></clipPath>
      ))}
    </defs>

    <g clipPath="url(#pane)">
      {OUTER.map((e) => <ellipse key={e.rx} cx={CX} cy={CY} rx={e.rx} ry={e.ry} fill={e.fill} />)}
      {COLUMNS.map((c) => (
        <g key={c.id} clipPath={`url(#${c.id})`}>
          <rect x={c.x} y={299} width={c.w} height={242} fill={c.fills[0]} />
          {OUTER.map((e, i) => <ellipse key={e.rx} cx={CX} cy={CY} rx={e.rx} ry={e.ry} fill={c.fills[i + 1]} />)}
        </g>
      ))}
      {INNER.map((e) => <ellipse key={e.rx} cx={CX} cy={CY} rx={e.rx} ry={e.ry} fill={e.fill} />)}

      <g stroke="#5a6aa8" strokeOpacity="0.08">
        {[151, 198, 245, 292, 340, 387, 434, 482, 529, 576].map((y) => <path key={y} d={`M62 ${y}.5H1239`} />)}
        {DAYS.map(([x]) => <path key={x} d={`M${x}.5 114V607`} />)}
      </g>

      <g shapeRendering="crispEdges">
        {CANDLES.map(([open, close, high = open, low = close], i) => {
          const x = CHART_LEFT + i * BAR;
          const top = Math.min(open, close);
          const fill = close < open ? '#3a948a' : '#e3504c';
          return (
            <g key={i} fill={fill}>
              <rect x={x + 1} y={high} width={1} height={low - high} />
              <rect x={x} y={top} width={BAR} height={Math.max(Math.abs(close - open), 1)} />
            </g>
          );
        })}
      </g>

      <g fill="none" strokeWidth="1.2">
        {OUTER.map((e) => <ellipse key={e.rx} cx={CX} cy={CY} rx={e.rx} ry={e.ry} stroke={e.stroke} />)}
        {INNER.map((e) => <ellipse key={e.rx} cx={CX} cy={CY} rx={e.rx} ry={e.ry} stroke={e.stroke} />)}
      </g>

      <path d="M62 515.500H1239" stroke="#d8433f" />
      {PRICE_LEVELS.map((l) => <path key={l.y} d={`M419 ${l.y}.5H1228`} stroke={l.color} />)}
      {TIME_LEVELS.map((l) => <path key={l.x} d={`M${l.x}.5 299V541`} stroke={l.color} />)}
      <path d="M419 299.500H1228M419 540.500H1228" stroke="#6f707a" />
      <path d="M417 299L623 541" stroke="#84868e" strokeDasharray="7 6" />
      <g stroke="#14161d" strokeWidth="1.100">
        <path d="M416 298L1028 541M416 298L1231 541M416 539L823 302M416 537L1025 301" />
      </g>
      <path d="M513 326L857 355" stroke="#67a55a" />
      <path d="M503 374L857 404" stroke="#2a9485" />

      <path d="M62 347.500H1239" stroke="#2a8a80" strokeDasharray="2 1" />
      <path d="M62 244.500H1239M1126.500 114V607" stroke="#6b7d88" strokeDasharray="6 6" />
      <g fill="none" strokeWidth="2">
        <circle cx="1242" cy="299" r="4" stroke="#9a9ca5" />
        <circle cx="1242" cy="359" r="4" stroke="#f57c00" />
        <circle cx="1242" cy="391" r="4" stroke="#7bd07e" />
        <circle cx="1242" cy="419" r="4" stroke="#4caf50" />
        <circle cx="1242" cy="448" r="4" stroke="#159a8a" />
        <circle cx="1242" cy="479" r="4" stroke="#2196f3" />
      </g>
      <text x="761" y="308" fontSize="22" fontWeight="300" fill="#2c2438" fontFamily="'Noto Sans CJK TC', sans-serif">突破才有前途</text>
      <path d="M820 315h13v11h4.500L826.500 339 815.500 326H820z" fill="#cf3350" />
    </g>

    {TIME_LEVELS.map((l) => (
      <g key={l.x} fill={l.color} textAnchor="middle">
        <text x={l.x} y={289}>{l.label}</text>
        <text x={l.x} y={560}>{l.label}</text>
      </g>
    ))}
    {CIRCLE_LABELS.map((l) => (
      <text key={l.label} x={514} y={l.y} textAnchor="end" fontWeight="500" fill={l.color}>{l.label}</text>
    ))}

    <path d="M1239.500 114V637M62 607.500H1311" stroke="#787b86" />
    {PRICES.map(([y, label]) => (
      <g key={y}>
        <path d={`M1240 ${y}.5h4`} stroke="#787b86" />
        <text x={1250} y={y + 5} fill="#6a6d78">{label}</text>
      </g>
    ))}
    {DAYS.map(([x, label, bold]) => (
      <g key={x}>
        <path d={`M${x}.5 608v3`} stroke="#787b86" />
        <text x={x} y={629} textAnchor="middle" fill="#6a6d78" fontWeight={bold ? 600 : 400}>{label}</text>
      </g>
    ))}

    <path d="M1219 235h19v19h-19zM1239 235h71v19h-71zM1069 608h113v26h-113z" fill="#4c525e" />
    <path d="M1223 244.500h11M1228.500 239v11M1240 244.500h3M1126.500 608v4" stroke="#fff" />
    <text x="1248" y="249" fill="#fff" fontWeight="600">1820.114</text>
    <text x="1076" y="626" fill="#fff" fontWeight="600">22 Jul '20</text>
    <text x="1142" y="626" fill="#fff" fontWeight="600">09:30</text>
    <path d="M1239 338h50v19h-50z" fill="#26a69a" />
    <path d="M1240 347.500h3" stroke="#fff" />
    <text x="1248" y="352" fill="#fff" fontWeight="600">17:35</text>
  </svg>
);

const Legend: React.FC = () => (
  <div className="absolute left-1 top-1 text-[13px]">
    <div className="mb-px flex h-[27px] w-[774px] items-center bg-white/50 pl-[5px] whitespace-nowrap">
      <h1 className="w-[301px] text-[17px] text-[#131722]">
        Gold Spot / U.S. Dollar <span className="text-[#b2b5be]">·</span> 30 <span className="text-[#b2b5be]">·</span> OANDA
      </h1>
      <span className="flex h-[18px] w-[21px] items-center justify-center rounded-l-full bg-[#c3dfe0]"><span className="size-2 rounded-full bg-[#00897b]" /></span>
      <span className="flex h-[18px] w-[22px] items-center justify-center rounded-r-full bg-[#f3b3cb] text-[15px] leading-none text-[#d81b60]">≈</span>
      <dl className="ml-[19px] flex gap-[10px] text-[#1a8f85]">
        {[['O', '1809.795'], ['H', '1811.510'], ['L', '1809.795'], ['C', '1811.403']].map(([k, v]) => (
          <div key={k} className="flex"><dt className="text-[#50535e]">{k}</dt><dd>{v}</dd></div>
        ))}
        <div><dt className="sr-only">Change</dt><dd>+1.607 (+0.09%)</dd></div>
      </dl>
    </div>
    {SYMBOLS.map((s) => (
      <div key={s.name} className="flex h-[26px] gap-[2px] text-[#b2b5be]">
        <span className={`flex shrink-0 items-center bg-white/50 pl-[5px] font-medium whitespace-nowrap ${s.width}`}>{s.name}</span>
        <button aria-label={`Show ${s.name}`} className="flex w-[31px] items-center justify-center bg-white/50 text-[#131722]">
          <Glyph size="size-5" box={20}><path d="M1.500 10c4-7 13-7 17 0c-4 7-13 7-17 0zM17 3L4 17" /><circle cx="10" cy="10" r="3" /></Glyph>
        </button>
      </div>
    ))}
    <button aria-label="Collapse legend" className="ml-[5px] mt-1 flex h-[22px] w-[32px] items-center justify-center rounded border border-[#d8cfdc] bg-white/90">
      <Chevron className="rotate-180" />
    </button>
  </div>
);

const LeftToolbar: React.FC = () => (
  <nav className="flex w-[57px] shrink-0 flex-col overflow-hidden bg-white text-[#131722]">
    <button aria-label="Menu" className="relative h-[43px] w-full shrink-0 border-b border-[#e0e3eb]">
      <svg viewBox="0 0 57 42" className="h-[42px] w-[57px]" stroke="#131722" strokeWidth="2">
        <path d="M19 14.500h11M19 21h18M19 27.500h19" /><circle cx="28" cy="35" r="2.500" fill="#b2b5be" stroke="none" />
      </svg>
      <span className="absolute left-[33px] top-[3px] flex h-4 w-[21px] items-center justify-center rounded-full bg-[#ff4a68] text-[11px] font-bold leading-none text-white">11</span>
    </button>
    {TOOLS.map((group, i) => (
      <div key={i} className="flex shrink-0 flex-col border-b border-[#e0e3eb] pb-[6px] pt-[5px]">
        {group.map((t) => (
          <button key={t.label} aria-label={t.label} className="flex h-10 items-center justify-center">{t.icon}</button>
        ))}
      </div>
    ))}
  </nav>
);

const RightToolbar: React.FC = () => (
  <nav className="flex w-[50px] shrink-0 flex-col overflow-hidden bg-white text-[#131722]">
    {WIDGETS.map((group, i) => (
      <div key={i} className={`flex shrink-0 flex-col pb-[7px] ${i < 2 ? 'border-b border-[#e0e3eb]' : ''} ${i > 0 ? 'pt-[7px]' : ''}`}>
        {group.map((w) => (
          <button key={w.label} aria-label={w.label} className="flex h-14 items-center justify-center">
            <Glyph size="size-9" box={36} className="overflow-visible">{w.icon}</Glyph>
          </button>
        ))}
      </div>
    ))}
  </nav>
);

const RangeBar: React.FC = () => (
  <div className="flex h-[41px] items-center rounded-b bg-white pl-[18px] pr-3 text-[14px] text-[#131722]">
    <div className="flex gap-[14px] text-[15px]">
      {RANGES.map((r) => <button key={r}>{r}</button>)}
    </div>
    <span className="ml-[17px] h-6 w-px bg-[#e0e3eb]" />
    <button aria-label="Go to date" className="ml-[14px]">
      <Glyph><path d="M6 11V8q0-2 2-2h12q2 0 2 2v12q0 2-2 2h-6M6 10h16M10 4v4M18 4v4M4 18h9M10 14.500l3.500 3.500-3.500 3.500" /></Glyph>
    </button>
    <button className="ml-auto text-[15px]">08:42:25 (UTC)</button>
    <span className="ml-[18px] h-6 w-px bg-[#e0e3eb]" />
    <button className="ml-[18px]">%</button>
    <button className="ml-[17px]">log</button>
    <button className="ml-4">auto</button>
  </div>
);

const PanelTabs: React.FC = () => (
  <div className="flex h-[43px] rounded-t bg-white pb-[2px] text-[15px] text-[#131722]">
    <button className="flex w-[146px] items-center whitespace-nowrap border-r border-[#e0e3eb] pl-[17px]">Stock Screener <Chevron className="ml-[11px]" /></button>
    {PANELS.map((p) => (
      <button key={p.label} className={`border-r border-[#e0e3eb] ${p.width}`}>{p.label}</button>
    ))}
    <button aria-label="Expand panel" className="ml-auto">
      <Glyph><path d="M5 17.500l9-8 9 8" /></Glyph>
    </button>
    <button aria-label="Maximize panel" className="ml-3 mr-[13px]">
      <Glyph><rect x="4" y="6" width="20" height="16" rx="2" /><path d="M4 9.500h20" /></Glyph>
    </button>
  </div>
);

const ChromeLogo: React.FC<{ colors: [string, string, string, string] }> = ({ colors }) => (
  <svg viewBox="0 0 30 30" className="size-[30px]" aria-hidden="true">
    <circle cx="15" cy="15" r="15" fill={colors[0]} />
    <path d="M15 8h13.300A15 15 0 0 1 14.500 30l6.700-11.500z" fill={colors[1]} />
    <path d="M2.300 7L8.900 18.500A7 7 0 0 0 17 21.700L14.500 30A15 15 0 0 1 2.300 7z" fill={colors[2]} />
    <circle cx="15" cy="15" r="7" fill="#fff" />
    <circle cx="15" cy="15" r="5.500" fill={colors[3]} />
  </svg>
);

const Taskbar: React.FC = () => (
  <footer className="flex h-10 shrink-0 items-stretch bg-linear-to-b from-[#b4827a] from-20% to-[#85504a] to-20% pl-4 text-white">
    <button aria-label="File Explorer" className="flex w-[60px] items-center justify-center">
      <svg viewBox="0 0 32 28" className="h-7 w-8">
        <path d="M1 3h9l2 2h17v21H1z" fill="#e8cf72" /><path d="M4 1h8v3H4z" fill="#4fae4a" /><path d="M13 3h9v3h-9z" fill="#d9493a" />
        <path d="M0 8h32v19H0z" fill="#f6e49a" /><path d="M5 28V18q0-3 3-3h16q3 0 3 3v10h-5v-6H10v6z" fill="#8fd0ec" />
      </svg>
    </button>
    <button className="flex w-[65px] items-center justify-center" aria-label="南極星">
      <span className="flex size-[30px] items-center justify-center rounded-full bg-radial from-[#9fc1ee] to-[#1c3f96] text-[23px] font-black leading-none text-[#e01b12]">南</span>
    </button>
    <button aria-label="Grammarly" className="flex w-[59px] items-center justify-center border border-white/40 bg-white/20">
      <svg viewBox="0 0 32 32" className="size-8"><circle cx="16" cy="16" r="16" fill="#15c39a" /><path d="M22.500 10.500A8.500 8.500 0 1 0 24.500 17h-6M24.500 17v4" fill="none" stroke="#fff" strokeWidth="2.600" /></svg>
    </button>
    <button aria-label="Chromium" className="ml-[3px] flex w-[59px] items-center justify-center border border-white/40 bg-white/20">
      <ChromeLogo colors={['#4f83bd', '#b9d3ee', '#86aedb', '#5a8ac2']} />
    </button>
    <button aria-label="Writer" className="ml-[3px] flex w-[52px] items-center justify-center border border-white/40 bg-white/20">
      <svg viewBox="0 0 32 32" className="size-8">
        <path d="M6 1h17l7 7v23H6z" fill="#f3f7fa" /><path d="M6 1h5v30H6z" fill="#1e3c50" /><path d="M23 1l7 7h-7z" fill="#1e3c50" />
        <path d="M13 17h14M13 21h10M13 25h14M13 29h14" stroke="#2a6a93" strokeWidth="1.600" /><path d="M0 14c3-6 8-6 11-3c2-6 10-9 18-6M4 8c3-5 7-5 10-3c2-4 6-5 11-4" fill="none" stroke="#c9dae5" strokeWidth="2.500" />
      </svg>
    </button>
    <span className="w-1 border border-l-0 border-white/40 bg-white/20" />
    <span className="w-1 border border-l-0 border-white/40 bg-white/20" />
    <button aria-label="Chrome" className="ml-[2px] flex w-[52px] items-center justify-center border border-white bg-white/45">
      <ChromeLogo colors={['#e1483a', '#fcc934', '#2f9e4f', '#4285f4']} />
    </button>
    <span className="w-1 border border-l-0 border-white/90 bg-white/30" />
    <span className="w-1 border border-l-0 border-white/90 bg-white/30" />
    <div className="ml-auto flex items-center gap-2 pr-[18px]">
      <svg viewBox="0 0 8 4" className="mr-[5px] h-1 w-2" fill="#fff"><path d="M0 4l4-4 4 4z" /></svg>
      <svg viewBox="0 0 16 16" className="size-4" fill="none" stroke="#fff"><path d="M3 1v4M6 1v4M1 5h7v3H1zM4.500 8v7M9 5V3h5v9" strokeWidth="1.400" /><path d="M9 9l6 6M15 9l-6 6" stroke="#e0282c" strokeWidth="2" /></svg>
      <svg viewBox="0 0 16 16" className="size-4" fill="#fff"><path d="M1 5h3l5-4v14l-5-4H1z" /><path d="M11 5q2 3 0 6M13 3q3.500 5 0 10" fill="none" stroke="#fff" /></svg>
      <svg viewBox="0 0 16 16" className="size-4" fill="#fff"><path d="M1 1h1.500v14H1zM3 2h6l1 2h4v6H3z" /><circle cx="11" cy="11" r="5" fill="#d8262b" /><path d="M9 9l4 4M13 9l-4 4" stroke="#fff" strokeWidth="1.400" /></svg>
      <svg viewBox="0 0 16 16" className="size-4" fill="none" stroke="#fff" strokeWidth="1.400"><path d="M6 4h9v7H6M8 14h6M11 11v3M1 1h4v5H1zM3 6v9h4" /></svg>
      <time className="ml-[2px] w-16 text-center text-[12px] leading-4">4:42 PM<br />7/20/2020</time>
    </div>
  </footer>
);

export default function App() {
  return (
    <div className="relative flex h-screen w-full flex-col overflow-hidden bg-[#e0e3eb] font-['Noto_Sans','Noto_Sans_CJK_TC',sans-serif]">
      <TabStrip />
      <AddressBar />
      <div className="flex min-h-0 flex-1 gap-[5px]">
        <LeftToolbar />
        <main className="flex min-w-0 flex-1 flex-col">
          <TopToolbar />
          <div className="relative min-h-0 flex-1">
            <ChartCanvas />
            <Legend />
            <button className="absolute right-[19px] top-[6px] h-[22px] w-[34px] rounded border border-[#d1d4dc] bg-white text-[12px] leading-none text-[#50535e]">USD</button>
            <button aria-label="Chart settings" className="absolute bottom-0 right-[22px] text-[#131722]">
              <Glyph><circle cx="14" cy="14" r="5" /><path d="M14 6.500V9M14 19v2.500M6.500 14H9M19 14h2.500M8.700 8.700l1.800 1.800M17.500 17.500l1.800 1.800M19.300 8.700l-1.800 1.800M8.700 19.300l1.800-1.800" /></Glyph>
            </button>
            <a href="#ideas" aria-label="Publish idea" className="absolute bottom-[38px] left-2 flex size-[35px] items-center justify-center rounded-full bg-white shadow-[0_0_3px_rgba(0,0,0,0.3)]">
              <CloudLogo className="h-[15px] w-6" />
            </a>
          </div>
          <div className="mt-[2px]"><RangeBar /></div>
          <div className="mt-[5px]"><PanelTabs /></div>
        </main>
        <RightToolbar />
      </div>
      <Taskbar />
      <ImeBar />
      <div className="absolute bottom-0 right-0 h-[135px] w-[7px] border-l border-t border-[#c4c4c4] bg-[#ececec]" />
    </div>
  );
}
